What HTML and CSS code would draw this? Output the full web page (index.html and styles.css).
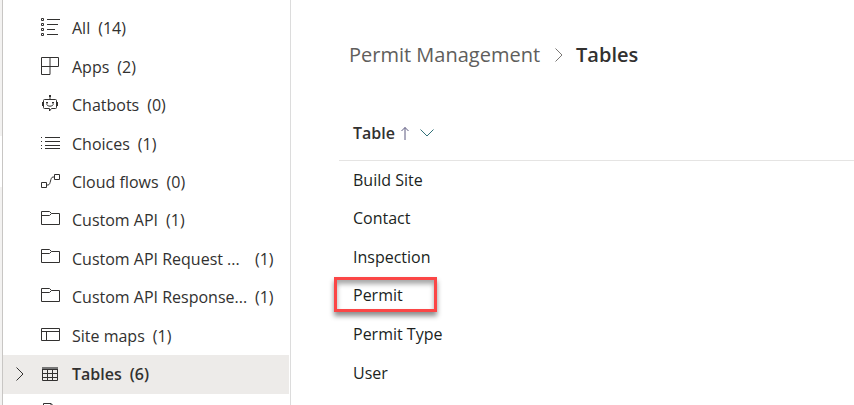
FILE: index.html
```html
<!DOCTYPE html>
<html lang="en">
<head>
<meta charset="utf-8">
<title>Permit Management - Tables</title>
<link rel="stylesheet" href="styles.css">
</head>
<body>
<svg class="defs" aria-hidden="true">
  <symbol id="folder" viewBox="0 0 20 16"><path d="M.5 14.500V1.500H8.500L10.500 3.500H18.500V14.500ZM.5 5.500H8.500L10.500 3.500"/></symbol>
</svg>
<div class="app">
  <div class="rail"><div class="thumb"></div></div>
  <nav class="sidebar" aria-label="Objects">
    <ul class="objects">
      <li><a class="item" href="#all"><svg class="icon" viewBox="0 0 20 20"><path d="M.5 1.500h2v2h-2zM.5 6.500h2v2h-2zM.5 11.500h2v2h-2zM.5 16.500h2v2h-2zM6 2.500h13M6 7.500h11M6 12.500h8M6 17.500h11"/></svg><span class="label">All</span><span class="count">(14)</span></a></li>
      <li><a class="item" href="#apps"><svg class="icon" viewBox="0 0 20 20"><path d="M.5 1.500h17v9h-8.500v8H.5zM9 1.500v9M.5 10.500h8.500"/></svg><span class="label">Apps</span><span class="count">(2)</span></a></li>
      <li><a class="item" href="#chatbots"><svg class="icon" viewBox="0 0 20 20"><path d="M3.500 5.500h11q1 0 1 1v7q0 1-1 1h-4L8.500 17v-2.500h-5q-1 0-1-1v-7q0-1 1-1zM9 5V2.500M1.500 8v4M16.500 8v4"/><path d="M5.500 10.500q3.500 3.500 7 0"/><path class="solid" d="M8 1h2v2H8zM5 8h2v1.500H5zM11 8h2v1.500h-2z"/></svg><span class="label">Chatbots</span><span class="count">(0)</span></a></li>
      <li><a class="item" href="#choices"><svg class="icon" viewBox="0 0 20 20"><path d="M0 4.500h1M0 8.500h1M0 12.500h1M0 15.500h1M4 4.500h15M4 8.500h15M4 12.500h15M4 15.500h15"/></svg><span class="label">Choices</span><span class="count">(1)</span></a></li>
      <li><a class="item" href="#flows"><svg class="icon" viewBox="0 0 20 20"><path d="M.5 11.500h5v5h-5zM13.500 3.500h5v5h-5zM5.500 14H7c3 0 2-8 5-8h1.500"/></svg><span class="label">Cloud flows</span><span class="count">(0)</span></a></li>
      <li><a class="item" href="#api"><svg class="icon folder"><use href="#folder"/></svg><span class="label">Custom API</span><span class="count">(1)</span></a></li>
      <li><a class="item" href="#request"><svg class="icon folder"><use href="#folder"/></svg><span class="label long">Custom API Request ...</span><span class="count">(1)</span></a></li>
      <li><a class="item" href="#response"><svg class="icon folder"><use href="#folder"/></svg><span class="label long">Custom API Response...</span><span class="count">(1)</span></a></li>
      <li><a class="item" href="#sitemaps"><svg class="icon" viewBox="0 0 20 20"><path d="M.5 3.500h18v12H.5zM.5 6.500h18M5.500 6.500v9"/></svg><span class="label">Site maps</span><span class="count">(1)</span></a></li>
      <li><a class="item selected" href="#tables" aria-current="page"><svg class="expand" viewBox="0 0 10 16"><path d="M1.500 1.500 8 8l-6.500 6.500"/></svg><svg class="icon" viewBox="0 0 20 20"><path d="M1.500 3.500h15v13h-15zM1.500 5.500h15M1.500 9.500h15M1.500 13.500h15M6.500 5.500v11M11.500 5.500v11"/><path class="bar" d="M1 4h16"/></svg><span class="label">Tables</span><span class="count">(6)</span></a></li>
      <li><a class="item" href="#resources" aria-label="Web resources"><svg class="icon" viewBox="0 0 20 20"><path d="M2.500 19V1.500h7.500l5 5V19M10 1.500v5h5"/></svg></a></li>
    </ul>
  </nav>
  <main class="content">
    <nav class="breadcrumb" aria-label="Breadcrumb">
      <a class="crumb" href="#solution">Permit Management</a>
      <svg class="divider" viewBox="0 0 10 16"><path d="M1.500 1.500 8 8l-6.500 6.500"/></svg>
      <h1 class="current">Tables</h1>
    </nav>
    <table class="grid">
      <thead>
        <tr><th scope="col"><button class="sort" type="button">Table<svg class="arrow" viewBox="0 0 8 14"><path d="M4 14V1.500M.5 5 4 1.500 7.500 5"/></svg><svg class="chevron" viewBox="0 0 14 8"><path d="M.5.5 7 7 13.500.5"/></svg></button></th></tr>
      </thead>
      <tbody>
        <tr><td>Build Site</td></tr>
        <tr><td>Contact</td></tr>
        <tr><td>Inspection</td></tr>
        <tr><td><div class="marked">Permit<span class="highlight"></span></div></td></tr>
        <tr><td>Permit Type</td></tr>
        <tr><td>User</td></tr>
      </tbody>
    </table>
  </main>
</div>
</body>
</html>
```
FILE: styles.css
```css
* {
  box-sizing: border-box;
}

body {
  margin: 0;
  background: #fff;
  color: #323130;
  font-family: "Open Sans", "Noto Sans", sans-serif;
  font-size: 16px;
  line-height: 24px;
}

svg {
  flex: none;
  fill: none;
  stroke: currentColor;
}

a {
  color: inherit;
  text-decoration: none;
}

.defs {
  position: absolute;
  width: 0;
  height: 0;
}

.app {
  display: flex;
  height: 100vh;
  overflow: hidden;
}

.rail {
  flex: none;
  width: 3px;
  padding-top: 136px;
  background: #f3f2f1;
  border-right: 1px solid #c8c6c4;
}

.thumb {
  height: 51px;
  background: #fff;
}

.sidebar {
  flex: none;
  width: 288px;
  padding: 9px 1px 0 0;
  border-right: 1px solid #dcdcdc;
}

.objects {
  display: grid;
  grid-auto-rows: 1fr;
  min-height: 423px;
  margin: 0;
  padding: 0;
  list-style: none;
}

.item {
  display: flex;
  align-items: center;
  position: relative;
  height: 100%;
  padding-left: 38px;
}

.icon {
  width: 20px;
  height: 20px;
  margin: 0 11px 2px 0;
}

.folder {
  height: 16px;
  margin-bottom: 5px;
}

.solid {
  fill: currentColor;
  stroke: none;
}

.bar {
  stroke: #777;
  stroke-width: 2px;
}

.label {
  white-space: nowrap;
}

.long {
  width: 175px;
}

.count {
  margin-left: 8px;
}

.selected {
  background: #edebe9;
  font-weight: 600;
}

.selected .icon {
  margin-bottom: 0;
}

.expand {
  position: absolute;
  left: 12px;
  width: 10px;
  height: 16px;
}

.content {
  flex: 1;
  min-width: 0;
  padding: 40px 0 0 48px;
}

.breadcrumb {
  display: flex;
  align-items: center;
  padding-left: 10px;
  font-size: 20px;
  line-height: 30px;
}

.crumb {
  color: #605e5c;
}

.divider {
  width: 10px;
  height: 16px;
  margin: 0 12px 0 14px;
  color: #797775;
}

.current {
  margin: 0;
  color: #323130;
  font-size: inherit;
  font-weight: 600;
}

.grid {
  width: 100%;
  height: 286px;
  margin-top: 36px;
  border-collapse: collapse;
}

.grid th,
.grid td {
  padding: 0 14px;
  text-align: left;
}

.grid th {
  height: 54px;
  border-bottom: 1px solid #e5e4e3;
}

.grid td {
  height: 38px;
  color: #201f1e;
}

.sort {
  display: flex;
  align-items: center;
  padding: 0;
  border: 0;
  background: none;
  color: #323130;
  font: inherit;
  font-weight: 600;
}

.arrow {
  width: 8px;
  height: 14px;
  margin: 0 11px 0 6px;
  color: #5c5a80;
}

.chevron {
  width: 14px;
  height: 8px;
  color: #317078;
}

.marked {
  position: relative;
}

.highlight {
  position: absolute;
  top: -6px;
  left: -19px;
  width: 103px;
  height: 35px;
  border: 3px solid #fb4646;
  box-shadow: 0 4px 5px rgb(0 0 0 / 45%), inset 0 4px 5px rgb(0 0 0 / 35%);
}
```
